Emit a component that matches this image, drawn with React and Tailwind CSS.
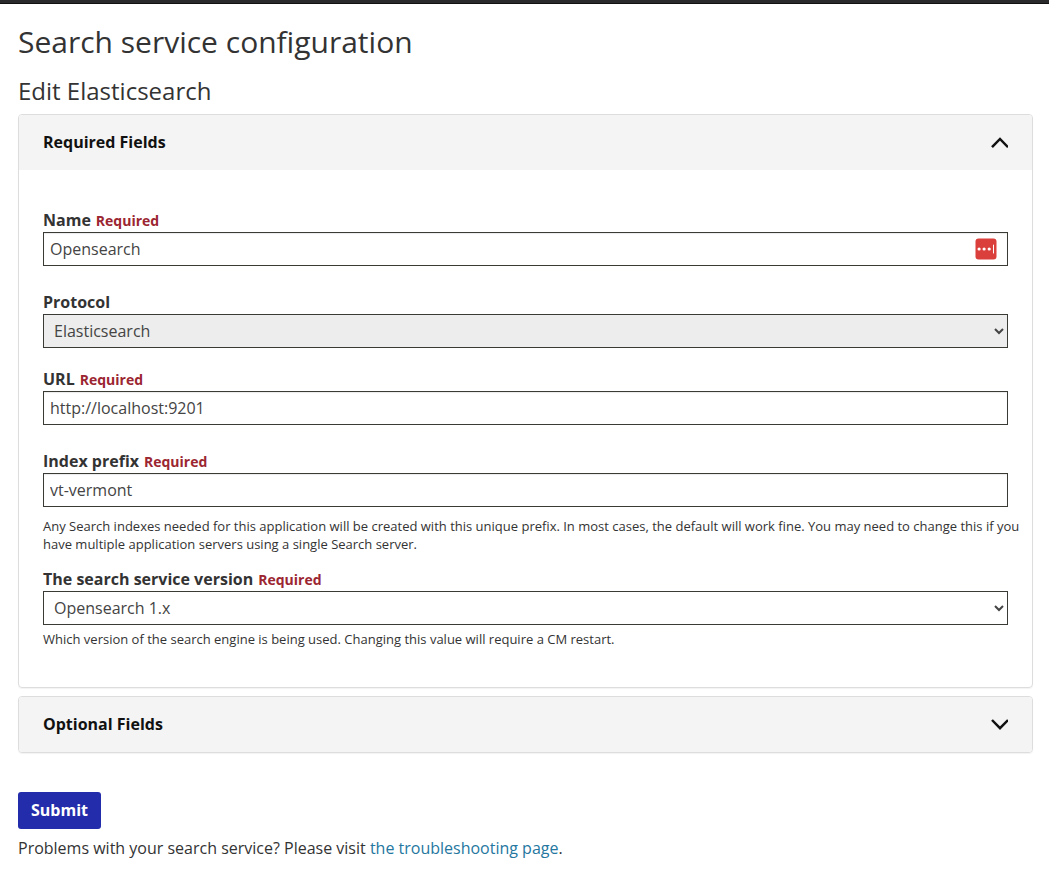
import { useState } from "react";

const control =
  "block h-[34px] w-full rounded-none border border-[#3b3b36] px-1.5 text-base text-[#444444]";
const textBox = control + " bg-white shadow-[inset_0_1px_1px_rgba(0,0,0,0.08)]";

function Label({ htmlFor, required, children }) {
  return (
    <label htmlFor={htmlFor} className="block text-base font-bold text-[#333333]">
      {children}
      {required && <span className="ml-[5px] text-sm text-[#9b2631]">Required</span>}
    </label>
  );
}

function Chevron({ up }) {
  return (
    <svg width="18" height="18" viewBox="0 0 18 18" fill="none" stroke="#111111" strokeWidth="2.5" aria-hidden="true">
      <path d={up ? "M2 14.2 10 6l8 8.2" : "M2 5l8 8.2L18 5"} />
    </svg>
  );
}

function Panel({ title, open, onToggle, children }) {
  return (
    <section className="overflow-hidden rounded border border-[#dddddd] shadow-[0_1px_1px_rgba(0,0,0,0.05)]">
      <button
        type="button"
        aria-expanded={open}
        onClick={onToggle}
        className="flex h-[55px] w-full items-center justify-between bg-[#f4f4f4] px-6 pb-0.5 text-base font-bold text-[#111111]"
      >
        <span>{title}</span>
        <Chevron up={open} />
      </button>
      {open && children}
    </section>
  );
}

export default function App() {
  const [requiredOpen, setRequiredOpen] = useState(true);
  const [optionalOpen, setOptionalOpen] = useState(false);

  return (
    <div className="bg-white font-['Open_Sans','Noto_Sans',sans-serif] text-base text-[#333333]">
      <div className="h-1 border-b border-[#111111] bg-[#2a2a2c]" />
      <main className="pl-[18px] pr-4 pt-5">
        <h1 className="text-[30px] leading-9">Search service configuration</h1>
        <h2 className="mt-4 text-2xl leading-[30px]">Edit Elasticsearch</h2>

        <form className="mt-2" onSubmit={(e) => e.preventDefault()}>
          <div className="flex flex-col gap-2">
            <Panel title="Required Fields" open={requiredOpen} onToggle={() => setRequiredOpen(!requiredOpen)}>
              <div className="px-6 pb-[39px] pt-[38px]">
                <div>
                  <Label htmlFor="name" required>Name</Label>
                  <div className="relative">
                    <input id="name" type="text" defaultValue="Opensearch" className={textBox} />
                    <svg className="absolute right-[11px] top-1.5" width="22" height="22" viewBox="0 0 22 22" aria-hidden="true">
                      <rect x="0.5" y="0.5" width="21" height="21" rx="3" fill="#db3f3b" />
                      <circle cx="4.1" cy="11" r="1.6" fill="#fff" />
                      <circle cx="9.1" cy="11" r="1.6" fill="#fff" />
                      <circle cx="14.2" cy="11" r="1.6" fill="#fff" />
                      <rect x="18" y="6.5" width="1" height="9" rx="0.5" fill="#fff" />
                    </svg>
                  </div>
                </div>

                <div className="mt-6">
                  <Label htmlFor="protocol">Protocol</Label>
                  <select id="protocol" disabled className={control + " bg-[#ededed] disabled:opacity-100"}>
                    <option>Elasticsearch</option>
                  </select>
                </div>

                <div className="mt-[19px]">
                  <Label htmlFor="url" required>URL</Label>
                  <input id="url" type="text" defaultValue="http://localhost:9201" className={textBox} />
                </div>

                <div className="mt-6">
                  <Label htmlFor="prefix" required>Index prefix</Label>
                  <input id="prefix" type="text" defaultValue="vt-vermont" className={textBox} />
                  <p className="-mr-4 mt-2.5 text-[13px] leading-[18px]">
                    Any Search indexes needed for this application will be created with this unique prefix. In most
                    cases, the default will work fine. You may need to change this if you have multiple application
                    servers using a single Search server.
                  </p>
                </div>

                <div className="mt-3.5">
                  <Label htmlFor="version" required>The search service version</Label>
                  <select id="version" className={control + " bg-white"}>
                    <option>Opensearch 1.x</option>
                  </select>
                  <p className="mt-[5px] text-[13px] leading-[18px]">
                    Which version of the search engine is being used. Changing this value will require a CM restart.
                  </p>
                </div>
              </div>
            </Panel>
            <Panel title="Optional Fields" open={optionalOpen} onToggle={() => setOptionalOpen(!optionalOpen)} />
          </div>

          <button
            type="submit"
            className="mt-[39px] block h-[37px] rounded-[3px] bg-[#232cab] px-[13px] pb-0.5 text-base font-bold text-white"
          >
            Submit
          </button>
        </form>

        <p className="mt-[7px]">
          Problems with your search service? Please visit{" "}
          <a href="#troubleshooting" className="text-[#2577a0]">the troubleshooting page</a>.
        </p>
      </main>
    </div>
  );
}
